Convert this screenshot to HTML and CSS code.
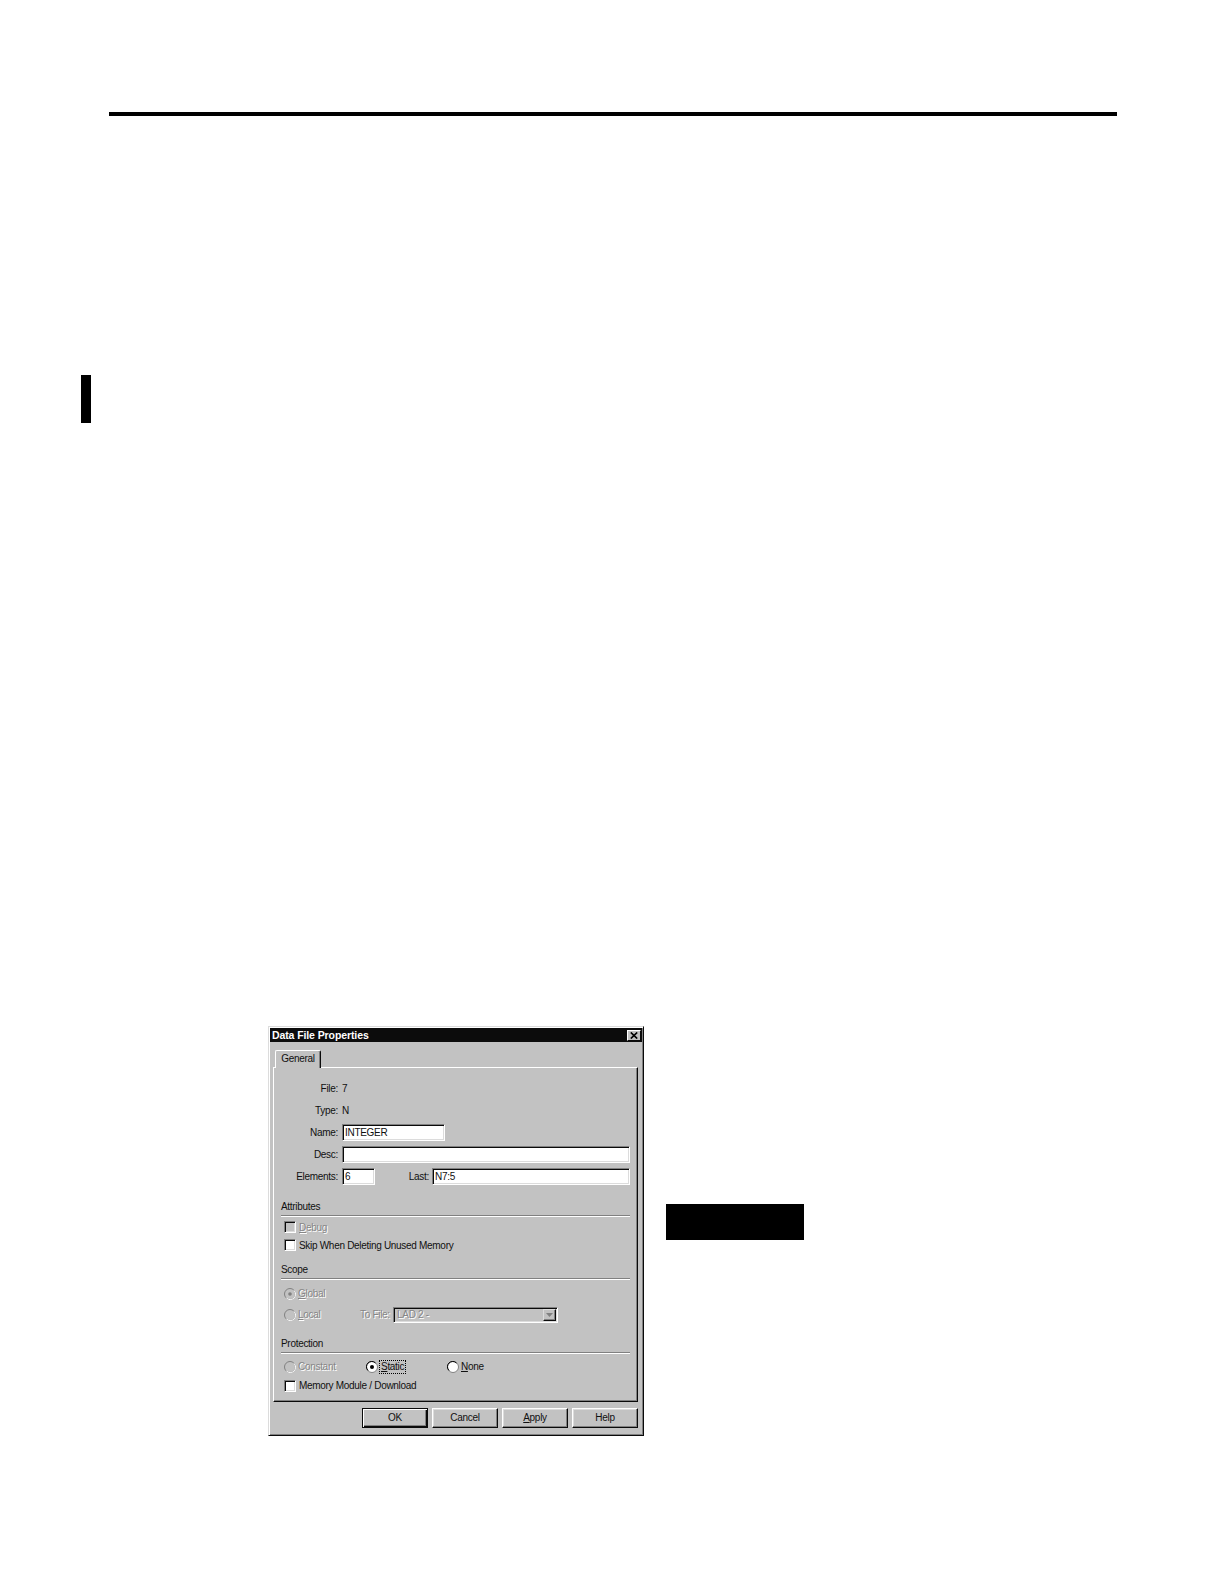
FILE: index.html
```html
<!DOCTYPE html>
<html lang="en">
<head>
<meta charset="utf-8">
<title>Data File Properties</title>
<link rel="stylesheet" href="styles.css">
</head>
<body>
<div class="page">
  <div class="rule"></div>
  <div class="side-tab"></div>
  <div class="figure-row">
    <div class="dialog">
      <div class="titlebar">
        <span class="title">Data File Properties</span>
        <span class="close-btn"><svg width="8" height="7" viewBox="0 0 8 7"><path d="M0.8 0.5 L7.2 6.5 M7.2 0.5 L0.8 6.5" stroke="#000" stroke-width="1.7" fill="none"/></svg></span>
      </div>
      <div class="tabs"><div class="tab">General</div></div>
      <div class="panel">
        <div class="row"><span class="lbl">File:</span><span class="val">7</span></div>
        <div class="row"><span class="lbl">Type:</span><span class="val">N</span></div>
        <div class="row"><span class="lbl">Name:</span><span class="field w-name">INTEGER</span></div>
        <div class="row"><span class="lbl">Desc:</span><span class="field w-desc"></span></div>
        <div class="row"><span class="lbl">Elements:</span><span class="field w-elem">6</span><span class="lbl lbl-last">Last:</span><span class="field w-last">N7:5</span></div>

        <div class="group-head">Attributes</div>
        <div class="etch"></div>
        <div class="list list-attr">
          <div class="opt-row h18"><span class="cb cb-dis"></span><span class="dis"><u>D</u>ebug</span></div>
          <div class="opt-row h18"><span class="cb"></span><span>Skip When Deleting Unused Memory</span></div>
        </div>

        <div class="group-head gh-scope">Scope</div>
        <div class="etch"></div>
        <div class="list list-scope">
          <div class="opt-row h21">
            <span class="radio"><svg width="12" height="12" viewBox="0 0 12 12"><circle cx="6" cy="6" r="5.5" fill="#c2c2c2" stroke="#808080"/><path d="M10 2.4 A5 5 0 0 1 2.4 10" stroke="#fff" fill="none"/><circle cx="6" cy="6" r="1.8" fill="#808080"/></svg></span>
            <span class="dis"><u>G</u>lobal</span>
          </div>
          <div class="opt-row h21">
            <span class="item w-local"><span class="radio"><svg width="12" height="12" viewBox="0 0 12 12"><circle cx="6" cy="6" r="5.5" fill="#c2c2c2" stroke="#808080"/><path d="M10 2.4 A5 5 0 0 1 2.4 10" stroke="#fff" fill="none"/></svg></span><span class="dis"><u>L</u>ocal</span></span>
            <span class="dis tofile">To File:</span>
            <span class="combo"><span class="dis combo-text">LAD 2 -</span><span class="drop"><svg width="7" height="4" viewBox="0 0 7 4"><path d="M0 0 H7 L3.5 4 Z" fill="#808080"/></svg></span></span>
          </div>
        </div>

        <div class="group-head gh-prot">Protection</div>
        <div class="etch"></div>
        <div class="list list-prot">
          <div class="opt-row h19">
            <span class="item w-const"><span class="radio"><svg width="12" height="12" viewBox="0 0 12 12"><circle cx="6" cy="6" r="5.5" fill="#c2c2c2" stroke="#808080"/><path d="M10 2.4 A5 5 0 0 1 2.4 10" stroke="#fff" fill="none"/></svg></span><span class="dis">Constant</span></span>
            <span class="item w-static"><span class="radio"><svg width="12" height="12" viewBox="0 0 12 12"><circle cx="6" cy="6" r="5.5" fill="#fff" stroke="#808080"/><path d="M2 9.5 A5 5 0 0 1 9.5 2" stroke="#000" fill="none"/><circle cx="6" cy="6" r="2" fill="#000"/></svg></span><span class="focus"><u>S</u>tatic</span></span>
            <span class="item"><span class="radio"><svg width="12" height="12" viewBox="0 0 12 12"><circle cx="6" cy="6" r="5.5" fill="#fff" stroke="#808080"/><path d="M2 9.5 A5 5 0 0 1 9.5 2" stroke="#000" fill="none"/></svg></span><span><u>N</u>one</span></span>
          </div>
          <div class="opt-row h19"><span class="cb"></span><span>Memory Module / Download</span></div>
        </div>
      </div>
      <div class="buttons">
        <span class="btn btn-default">OK</span>
        <span class="btn">Cancel</span>
        <span class="btn"><u>A</u>pply</span>
        <span class="btn">Help</span>
      </div>
    </div>
    <div class="callout"></div>
  </div>
</div>
</body>
</html>
```

FILE: styles.css
```css
html, body {
  margin: 0;
  padding: 0;
  background: #fff;
}

.page {
  width: 1224px;
  min-height: 1582px;
  background: #fff;
  overflow: hidden;
  font-family: "Liberation Sans", Arial, sans-serif;
  font-size: 10px;
  letter-spacing: -0.3px;
  color: #101010;
}

.rule {
  margin: 112px 0 0 109px;
  width: 1008px;
  height: 4px;
  background: #000;
}

.side-tab {
  margin: 259px 0 0 81px;
  width: 10px;
  height: 48px;
  background: #000;
}

.figure-row {
  display: flex;
  align-items: flex-start;
  margin: 603px 0 0 268px;
}

.dialog {
  width: 376px;
  height: 410px;
  box-sizing: border-box;
  background: #c2c2c2;
  border: 1px solid;
  border-color: #dcdcdc #0a0a0a #0a0a0a #dcdcdc;
  box-shadow: inset 1px 1px #fff, inset -1px -1px #808080;
  padding: 1px;
  display: flex;
  flex-direction: column;
  flex: none;
}

.titlebar {
  height: 14px;
  background: #0c0c0c;
  display: flex;
  align-items: center;
  justify-content: space-between;
  padding-left: 2px;
}

.title {
  color: #fff;
  font-weight: bold;
  font-size: 10.5px;
  letter-spacing: -0.1px;
  line-height: 14px;
}

.close-btn {
  width: 14px;
  height: 11px;
  margin-right: 1px;
  box-sizing: border-box;
  background: #c2c2c2;
  border: 1px solid;
  border-color: #fff #0a0a0a #0a0a0a #fff;
  display: flex;
  align-items: center;
  justify-content: center;
}

.close-btn svg { display: block; }

.tabs {
  margin-top: 8px;
  padding-left: 5px;
  height: 17px;
  display: flex;
}

.tab {
  position: relative;
  z-index: 1;
  width: 46px;
  height: 18px;
  box-sizing: border-box;
  background: #c2c2c2;
  border-top: 1px solid #fff;
  border-left: 1px solid #fff;
  border-right: 1px solid #0a0a0a;
  box-shadow: inset -1px 0 #808080;
  border-radius: 2px 2px 0 0;
  text-align: center;
  line-height: 15px;
}

.panel {
  margin: 0 4px 0 3px;
  height: 335px;
  box-sizing: border-box;
  border: 1px solid;
  border-color: #fff #0a0a0a #0a0a0a #fff;
  box-shadow: inset -1px -1px #808080;
  padding: 9px 7px 0 6px;
}

.row {
  display: flex;
  align-items: center;
  height: 22px;
}

.lbl {
  flex: none;
  width: 58px;
  margin-right: 4px;
  text-align: right;
}

.lbl-last {
  width: 54px;
  margin-right: 3px;
}

.field {
  flex: none;
  height: 17px;
  box-sizing: border-box;
  background: #fff;
  border: 1px solid;
  border-color: #808080 #fff #fff #808080;
  box-shadow: inset 1px 1px #0a0a0a, inset -1px -1px #dcdcdc;
  padding: 0 2px;
  line-height: 15px;
}

.w-name { width: 103px; }
.w-desc { width: 288px; }
.w-elem { width: 33px; }
.w-last { width: 198px; }

.group-head {
  margin-top: 14px;
  line-height: 12px;
  padding-left: 1px;
}

.gh-scope { margin-top: 10px; }
.gh-prot { margin-top: 13px; }

.etch {
  margin: 2px 0 0 1px;
  height: 0;
  border-top: 1px solid #808080;
  border-bottom: 1px solid #fff;
}

.list-attr { margin-top: 1px; }
.list-scope { margin-top: 3px; }
.list-prot { margin-top: 3px; }

.opt-row {
  display: flex;
  align-items: center;
  padding-left: 4px;
}

.h18 { height: 18px; }
.h19 { height: 19px; }
.h21 { height: 21px; }

.item {
  display: flex;
  align-items: center;
  flex: none;
}

.w-local { width: 76px; }
.w-const { width: 82px; }
.w-static { width: 81px; }

.cb {
  flex: none;
  width: 12px;
  height: 12px;
  box-sizing: border-box;
  background: #fff;
  border: 1px solid;
  border-color: #808080 #fff #fff #808080;
  box-shadow: inset 1px 1px #0a0a0a, inset -1px -1px #dcdcdc;
  margin-right: 3px;
}

.cb-dis { background: #c2c2c2; }

.radio {
  flex: none;
  width: 12px;
  height: 12px;
  margin-right: 2px;
}

.radio svg { display: block; }

.dis {
  color: #868686;
  text-shadow: 1px 1px 0 #fff;
}

.focus {
  outline: 1px dotted #000;
  outline-offset: 0;
  padding: 0 1px;
  line-height: 12px;
}

.tofile {
  width: 33px;
  flex: none;
}

.combo {
  flex: none;
  width: 165px;
  height: 16px;
  box-sizing: border-box;
  background: #c2c2c2;
  border: 1px solid;
  border-color: #808080 #fff #fff #808080;
  box-shadow: inset 1px 1px #0a0a0a, inset -1px -1px #dcdcdc;
  display: flex;
  align-items: center;
  justify-content: space-between;
  padding: 1px 1px 1px 3px;
}

.drop {
  width: 13px;
  height: 12px;
  box-sizing: border-box;
  background: #c2c2c2;
  border: 1px solid;
  border-color: #dcdcdc #0a0a0a #0a0a0a #dcdcdc;
  box-shadow: inset -1px -1px #808080;
  display: flex;
  align-items: center;
  justify-content: center;
}

.drop svg { display: block; }

.buttons {
  display: flex;
  justify-content: flex-end;
  gap: 4px;
  margin: 6px 4px 0 0;
}

.btn {
  width: 66px;
  height: 20px;
  box-sizing: border-box;
  border: 1px solid;
  border-color: #fff #0a0a0a #0a0a0a #fff;
  box-shadow: inset -1px -1px #808080, inset 1px 1px #dcdcdc;
  text-align: center;
  line-height: 18px;
}

.btn-default {
  border-color: #0a0a0a;
  box-shadow: inset 1px 1px #fff, inset -1px -1px #0a0a0a, inset -2px -2px #808080;
}

.callout {
  flex: none;
  margin: 178px 0 0 22px;
  width: 138px;
  height: 36px;
  background: #000;
}
```
